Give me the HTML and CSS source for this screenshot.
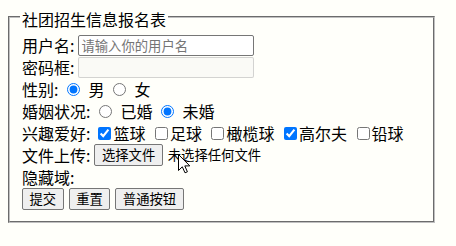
FILE: index.html
```html
<!DOCTYPE html>
<html lang="zh-CN">
<head>
<meta charset="utf-8">
<title>社团招生信息报名表</title>
<link rel="stylesheet" href="styles.css">
</head>
<body>
<form class="signup">
  <fieldset class="panel">
    <legend class="panel-title">社团招生信息报名表</legend>
    <div class="row">
      <span class="label">用户名:</span>
      <input class="text-input" type="text" placeholder="请输入你的用户名">
    </div>
    <div class="row">
      <span class="label">密码框:</span>
      <input class="text-input" type="password" disabled>
    </div>
    <div class="row">
      <span class="label">性别:</span>
      <input class="radio" type="radio" name="sex" checked><span>男</span>
      <input class="radio" type="radio" name="sex"><span>女</span>
    </div>
    <div class="row">
      <span class="label">婚姻状况:</span>
      <input class="radio" type="radio" name="marry"><span>已婚</span>
      <input class="radio" type="radio" name="marry" checked><span>未婚</span>
    </div>
    <div class="row">
      <span class="label">兴趣爱好:</span>
      <input class="check check-first" type="checkbox" checked><span>篮球</span>
      <input class="check" type="checkbox"><span>足球</span>
      <input class="check" type="checkbox"><span>橄榄球</span>
      <input class="check" type="checkbox" checked><span>高尔夫</span>
      <input class="check" type="checkbox"><span>铅球</span>
    </div>
    <div class="row">
      <span class="label">文件上传:</span>
      <label class="file-picker">
        <input class="file-native" type="file">
        <span class="btn file-btn">选择文件</span>
        <span class="file-name">未选择任何文件</span>
      </label>
    </div>
    <div class="row">
      <span class="label">隐藏域:</span>
      <input type="hidden" name="hid" value="">
    </div>
    <div class="row">
      <button class="btn" type="submit">提交</button>
      <button class="btn" type="reset">重置</button>
      <button class="btn" type="button">普通按钮</button>
    </div>
  </fieldset>
</form>
<svg class="cursor" width="13" height="20" viewBox="0 0 13 20" aria-hidden="true">
  <path d="M0.5 0.5 L0.5 16.5 L4.3 12.8 L7 18.8 L9.4 17.8 L6.8 11.9 L11.8 11.9 Z" fill="#fff" stroke="#000" stroke-width="1" stroke-linejoin="miter"/>
</svg>
</body>
</html>
```

FILE: styles.css
```css
html {
  background: #fffffa;
}

body {
  margin: 8px;
  font-family: "Noto Sans CJK SC", "Noto Sans", sans-serif;
  font-size: 16px;
  color: #000;
}

.signup {
  margin: 0;
}

.panel {
  margin: 0;
  width: 399px;
  padding: 9px 12px 11px;
  border: 2px groove #c0c0c0;
}

.panel-title {
  margin-left: -2px;
  padding: 5px 2px 0;
  line-height: 12px;
}

.row {
  display: flex;
  align-items: center;
  height: 22px;
  line-height: 22px;
  white-space: nowrap;
}

.label {
  margin-right: 0;
}

.text-input {
  box-sizing: border-box;
  width: 176px;
  height: 21px;
  margin: 0 0 0 4px;
  padding: 1px 2px;
  font-family: "Noto Sans CJK SC", sans-serif;
  font-size: 13.33px;
  line-height: 17px;
  border: 1px solid #767676;
  border-radius: 2px;
  background: #fff;
}

.text-input::placeholder {
  color: #757575;
}

.text-input:disabled {
  background: rgba(239, 239, 239, 0.3);
  border-color: rgba(118, 118, 118, 0.3);
}

.radio {
  width: 13px;
  height: 13px;
  margin: 0 8px 0 9px;
}

.check {
  width: 13px;
  height: 13px;
  margin: 0 2px 0 9.5px;
}

.check-first {
  margin-left: 8px;
}

.file-picker {
  display: flex;
  align-items: center;
}

.file-native {
  display: none;
}

.btn {
  box-sizing: border-box;
  height: 22px;
  margin: 0 5px 0 0;
  padding: 0 6.5px;
  font-family: "Noto Sans CJK SC", sans-serif;
  font-size: 13.33px;
  line-height: 20px;
  color: #000;
  background: #efefef;
  border: 1px solid #767676;
  border-radius: 2px;
}

.file-btn {
  display: inline-block;
  margin: 0 5px 0 4px;
}

.file-name {
  font-size: 13.33px;
}

.cursor {
  position: absolute;
  left: 178px;
  top: 154px;
}
```
